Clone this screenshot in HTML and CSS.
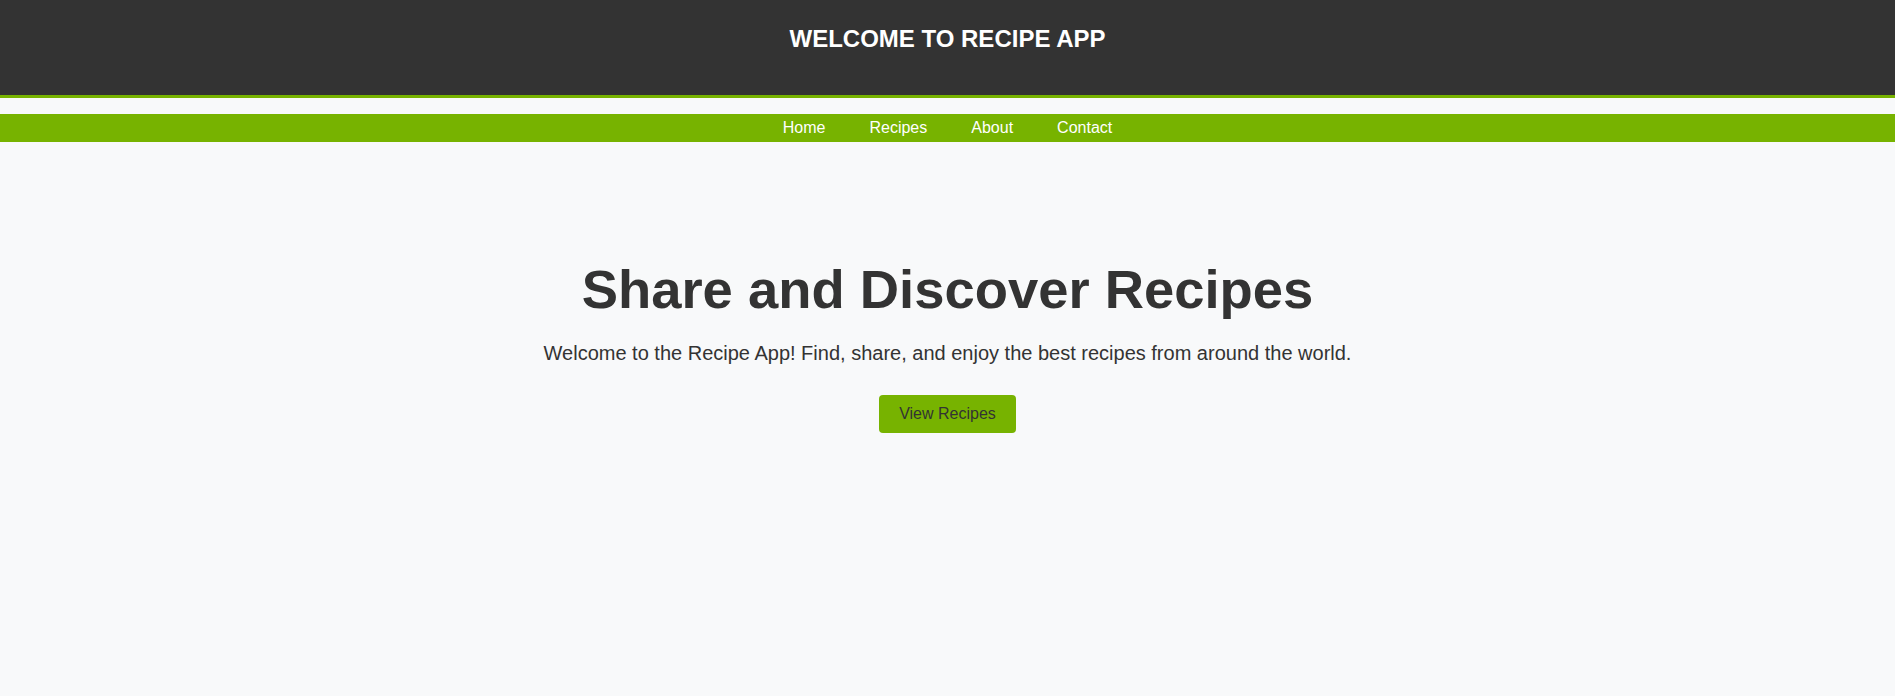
FILE: index.html
```html
<!DOCTYPE html>
<html lang="en">
<head>
<meta charset="utf-8">
<title>Recipe App</title>
<link rel="stylesheet" href="styles.css">
</head>
<body>
<header class="site-header">
  <h1 class="site-title">WELCOME TO RECIPE APP</h1>
</header>
<nav class="main-nav">
  <a href="#" class="nav-link">Home</a>
  <a href="#" class="nav-link">Recipes</a>
  <a href="#" class="nav-link">About</a>
  <a href="#" class="nav-link">Contact</a>
</nav>
<main class="hero">
  <h2 class="hero-title">Share and Discover Recipes</h2>
  <p class="hero-text">Welcome to the Recipe App! Find, share, and enjoy the best recipes from around the world.</p>
  <a href="#" class="hero-button">View Recipes</a>
</main>
</body>
</html>
```
FILE: styles.css
```css
html, body {
  margin: 0;
  padding: 0;
}
body {
  background: #f8f9fa;
  font-family: "Liberation Sans", Arial, sans-serif;
  color: #333333;
  min-height: 696px;
}
.site-header {
  background: #333333;
  border-bottom: 3px solid #77b300;
  padding: 25px 0 42px;
  text-align: center;
}
.site-title {
  margin: 0;
  color: #ffffff;
  font-size: 24px;
  font-weight: bold;
  line-height: 28px;
}
.main-nav {
  margin-top: 16px;
  background: #77b300;
  display: flex;
  justify-content: center;
  gap: 44px;
  padding: 5px 0 5px;
}
.nav-link {
  color: #ffffff;
  text-decoration: none;
  font-size: 16px;
  line-height: 18px;
}
.hero {
  display: flex;
  flex-direction: column;
  align-items: center;
  text-align: center;
  padding-top: 116px;
}
.hero-title {
  margin: 0;
  font-size: 54.4px;
  font-weight: bold;
  line-height: 63px;
  color: #333333;
}
.hero-text {
  margin: 21px 0 0;
  font-size: 20px;
  line-height: 23px;
  color: #333333;
}
.hero-button {
  margin-top: 30px;
  background: #77b300;
  color: #333333;
  text-decoration: none;
  font-size: 16px;
  line-height: 18px;
  padding: 10px 20px;
  border-radius: 4px;
}
```
